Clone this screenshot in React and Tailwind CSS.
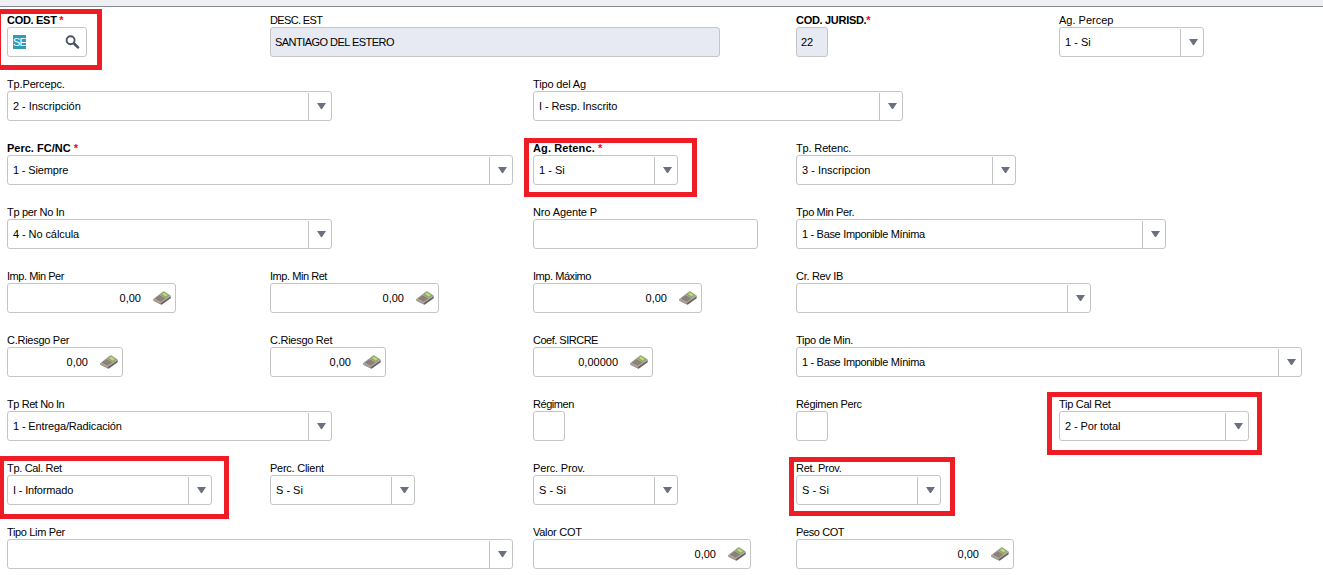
import { useState } from "react";

const rows = [
  [
    { label: "COD. EST ", required: true, type: "search", value: "SE", col: "col-start-1", width: "w-[80px]", labelGap: "tracking-[-0.3px]", valueGap: "tracking-[-0.8px]", mark: "-left-[11px] -top-[5px] w-[106px] h-[61px]" },
    { label: "DESC. EST", type: "readonly", value: "SANTIAGO DEL ESTERO", col: "col-start-2", width: "w-[450px]", labelGap: "tracking-[-0.65px]", valueGap: "tracking-[-0.54px]" },
    { label: "COD. JURISD.", required: true, type: "readonly", value: "22", col: "col-start-4", width: "w-[32px]", labelGap: "tracking-[-0.3px]" },
    { label: "Ag. Percep", type: "select", value: "1 - Si", col: "col-start-5", width: "w-[145px]" },
  ],
  [
    { label: "Tp.Percepc.", type: "select", value: "2 - Inscripción", col: "col-start-1", width: "w-[325px]", labelGap: "tracking-[-0.15px]", valueGap: "tracking-[-0.05px]" },
    { label: "Tipo del Ag", type: "select", value: "I - Resp. Inscrito", col: "col-start-3", width: "w-[370px]", labelGap: "tracking-[-0.15px]", valueGap: "tracking-[-0.1px]" },
  ],
  [
    { label: "Perc. FC/NC ", required: true, type: "select", value: "1 - Siempre", col: "col-start-1", width: "w-[506px]", valueGap: "tracking-[-0.15px]" },
    { label: "Ag. Retenc. ", required: true, type: "select", value: "1 - Si", col: "col-start-3", width: "w-[145px]", labelGap: "tracking-[0.12px]", mark: "-left-[9px] -top-[4px] w-[173px] h-[59px]" },
    { label: "Tp. Retenc.", type: "select", value: "3 - Inscripcion", col: "col-start-4", width: "w-[220px]", labelGap: "tracking-[-0.15px]" },
  ],
  [
    { label: "Tp per No In", type: "select", value: "4 - No cálcula", col: "col-start-1", width: "w-[325px]", labelGap: "tracking-[-0.33px]", valueGap: "tracking-[-0.08px]" },
    { label: "Nro Agente P", type: "text", value: "", col: "col-start-3", width: "w-[225px]", labelGap: "tracking-[-0.12px]" },
    { label: "Tpo Min Per.", type: "select", value: "1 - Base Imponible Mínima", col: "col-start-4", width: "w-[370px]", labelGap: "tracking-[-0.35px]", valueGap: "tracking-[-0.32px]" },
  ],
  [
    { label: "Imp. Min Per", type: "number", value: "0,00", col: "col-start-1", width: "w-[169px]", labelGap: "tracking-[-0.45px]" },
    { label: "Imp. Min Ret", type: "number", value: "0,00", col: "col-start-2", width: "w-[169px]", labelGap: "tracking-[-0.45px]" },
    { label: "Imp. Máximo", type: "number", value: "0,00", col: "col-start-3", width: "w-[169px]", labelGap: "tracking-[-0.45px]" },
    { label: "Cr. Rev IB", type: "select", value: "", col: "col-start-4", width: "w-[295px]", labelGap: "tracking-[-0.3px]" },
  ],
  [
    { label: "C.Riesgo Per", type: "number", value: "0,00", col: "col-start-1", width: "w-[116px]", labelGap: "tracking-[-0.27px]" },
    { label: "C.Riesgo Ret", type: "number", value: "0,00", col: "col-start-2", width: "w-[116px]", labelGap: "tracking-[-0.27px]" },
    { label: "Coef. SIRCRE", type: "number", value: "0,00000", col: "col-start-3", width: "w-[120px]", labelGap: "tracking-[-0.5px]" },
    { label: "Tipo de Min.", type: "select", value: "1 - Base Imponible Mínima", col: "col-start-4", width: "w-[506px]", labelGap: "tracking-[-0.25px]", valueGap: "tracking-[-0.32px]" },
  ],
  [
    { label: "Tp Ret No In", type: "select", value: "1 - Entrega/Radicación", col: "col-start-1", width: "w-[325px]", labelGap: "tracking-[-0.42px]", valueGap: "tracking-[-0.14px]" },
    { label: "Régimen", type: "text", value: "", col: "col-start-3", width: "w-[32px]", labelGap: "tracking-[-0.45px]" },
    { label: "Régimen Perc", type: "text", value: "", col: "col-start-4", width: "w-[32px]", labelGap: "tracking-[-0.33px]" },
    { label: "Tip Cal Ret", type: "select", value: "2 - Por total", col: "col-start-5", width: "w-[190px]", labelGap: "tracking-[-0.27px]", valueGap: "tracking-[-0.12px]", mark: "-left-[12px] -top-[6px] w-[215px] h-[63px]" },
  ],
  [
    { label: "Tp. Cal. Ret", type: "select", value: "I - Informado", col: "col-start-1", width: "w-[205px]", labelGap: "tracking-[-0.33px]", valueGap: "tracking-[-0.17px]", mark: "-left-[8px] -top-[6px] w-[230px] h-[63px]" },
    { label: "Perc. Client", type: "select", value: "S - Si", col: "col-start-2", width: "w-[145px]", labelGap: "tracking-[-0.25px]" },
    { label: "Perc. Prov.", type: "select", value: "S - Si", col: "col-start-3", width: "w-[145px]", labelGap: "tracking-[-0.15px]" },
    { label: "Ret. Prov.", type: "select", value: "S - Si", col: "col-start-4", width: "w-[145px]", labelGap: "tracking-[-0.25px]", mark: "-left-[7px] -top-[5px] w-[166px] h-[59px]" },
  ],
  [
    { label: "Tipo Lim Per", type: "select", value: "", col: "col-start-1", width: "w-[506px]", labelGap: "tracking-[-0.35px]" },
    { label: "Valor COT", type: "number", value: "0,00", col: "col-start-3", width: "w-[218px]", labelGap: "tracking-[-0.27px]" },
    { label: "Peso COT", type: "number", value: "0,00", col: "col-start-4", width: "w-[218px]", labelGap: "tracking-[-0.4px]" },
  ],
];

const SearchIcon = () => (
  <svg width="15" height="15" viewBox="0 0 15 15" fill="none" stroke="#4a5466">
    <circle cx="5.6" cy="5.3" r="4" strokeWidth="1.9" />
    <path d="M8.6 8.3L10 9.6" strokeWidth="2" />
    <path d="M9.8 9.3L13 12.4" strokeWidth="2.7" strokeLinecap="round" />
  </svg>
);

const CalculatorIcon = () => (
  <svg width="18" height="14" viewBox="0 0 18 14">
    {/* body edges */}
    <path d="M0.3 8L7.8 11.6L17.7 5V7.2L8.6 13.8L0.5 9.8Z" fill="#66635f" />
    <path d="M0.3 8L7.8 11.6V13.4L0.5 9.8Z" fill="#a19d98" />
    {/* top face */}
    <path d="M0.3 7.9L9.6 0.7Q10.6 0.1 11.6 0.6L17.7 4.4V5.2L7.8 11.9Z" fill="#aca69e" />
    <path d="M2 7.6L6.2 4.2L12 7.4L7.8 10.5Z" fill="#84776d" />
    <path d="M3.8 6.4L9.2 9.3M5.2 5.3L10.6 8.4" stroke="#b5a99f" strokeWidth="0.4" />
    {/* display */}
    <path d="M7.4 3.2L10.9 0.9L16 4.1L12.6 6.5Z" fill="#87966d" />
    <path d="M8.6 3.1L11 1.5L15 4.1L12.7 5.7Z" fill="#b0e45c" />
  </svg>
);

const Control = ({ field }) => {
  const [value, setValue] = useState(field.value);
  const box = `flex h-[30px] rounded-[3px] border border-[#c3c5c7] ${field.width} ${field.valueGap || ""}`;

  if (field.type === "select") {
    return (
      <div className={`${box} bg-white`}>
        <div className="flex-1 pl-[5px] leading-[28px]">{value}</div>
        <button type="button" className="mt-px flex w-[23px] items-center justify-center border-l border-[#c3c5c7] pb-px pl-[3px]">
          <svg width="9" height="6" viewBox="0 0 9 6">
            <path d="M0 0H9L5 6H4Z" fill="#697080" />
          </svg>
        </button>
      </div>
    );
  }

  if (field.type === "search") {
    return (
      <div className={`${box} items-center justify-between bg-white pl-[5px] pr-[6px]`}>
        <span className="bg-[#3399b5] leading-[14px] text-white">{value}</span>
        <SearchIcon />
      </div>
    );
  }

  if (field.type === "number") {
    return (
      <div className={`${box} items-center justify-end gap-[12px] bg-white pr-[4px]`}>
        <span>{value}</span>
        <CalculatorIcon />
      </div>
    );
  }

  if (field.type === "readonly") {
    return <div className={`${box} bg-[#e7eaf2] pl-[4px] leading-[28px]`}>{value}</div>;
  }

  return (
    <input
      className={`${box} bg-white px-[5px] outline-none`}
      value={value}
      onChange={(e) => setValue(e.target.value)}
    />
  );
};

const Field = ({ field }) => (
  <div className={`relative ${field.col}`}>
    <label className={`block h-[13px] whitespace-pre leading-[13px] ${field.labelGap || ""} ${field.required ? "font-bold" : ""}`}>
      {field.label}
      {field.required && <span className="text-[#ff0000]">*</span>}
    </label>
    <Control field={field} />
    {/* Red highlight around the fields to fill in */}
    {field.mark && <div className={`pointer-events-none absolute border-5 border-[#ee1c25] ${field.mark}`} />}
  </div>
);

const App = () => {
  return (
    <div className="h-[575px] overflow-hidden bg-white font-['Liberation_Sans',Arial,sans-serif] text-[11px] text-black">
      <div className="h-[7px] border-b border-[#868a90] bg-[#eeeff2]" />
      <form className="pl-[7px] pt-[7px]">
        {rows.map((fields, i) => (
          <div key={i} className="grid h-[64px] grid-cols-[repeat(5,263px)]">
            {fields.map((field) => (
              <Field key={field.label} field={field} />
            ))}
          </div>
        ))}
      </form>
    </div>
  );
};

export default App;
